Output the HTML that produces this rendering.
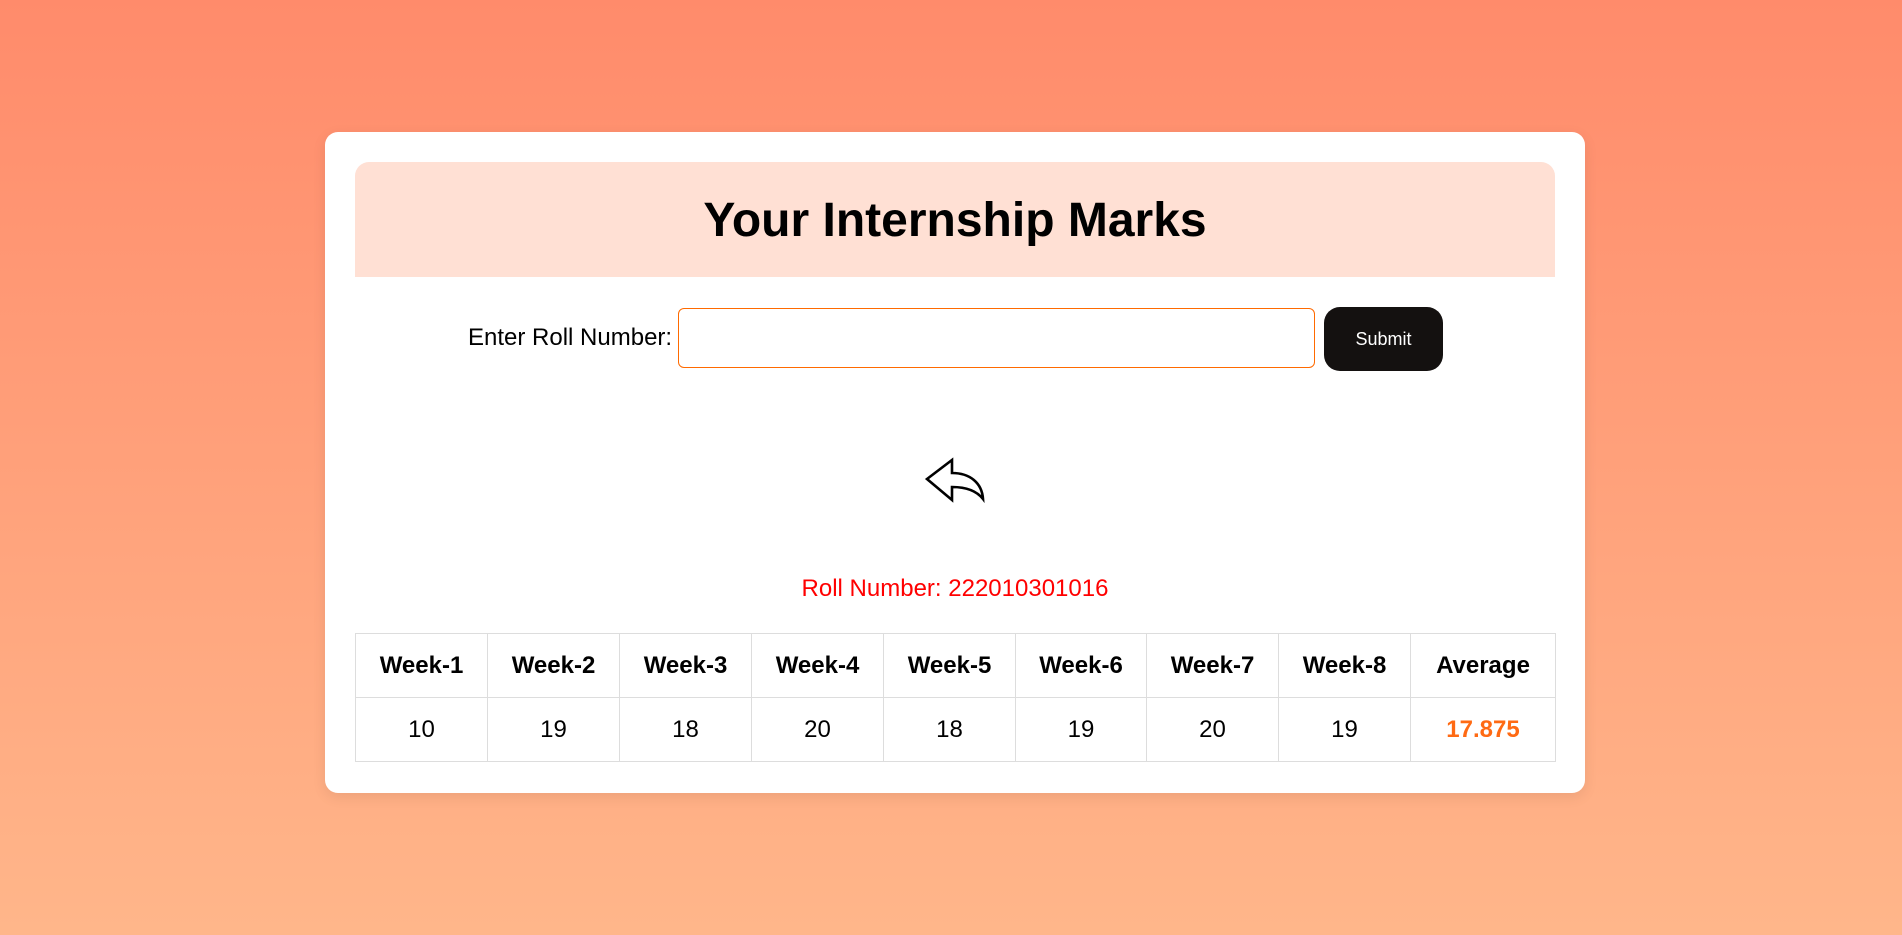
<!DOCTYPE html>
<html><head><style>
html,body{margin:0;padding:0;width:1902px;height:935px;overflow:hidden}
body{background:linear-gradient(180deg,#ff8b6b 0%,#ffb68a 100%);font-family:"Liberation Sans",Arial,sans-serif;position:relative}
.card{position:absolute;left:325px;top:132px;width:1260px;height:661px;background:#fff;border-radius:13px;box-shadow:0 4px 14px rgba(0,0,0,0.08)}
.head{position:absolute;left:30px;top:30px;width:1200px;height:115px;background:#ffe0d4;border-radius:14px 14px 0 0}
.head h1{margin:0;font-size:48px;font-weight:bold;text-align:center;line-height:117px;color:#000}
.label{position:absolute;left:143px;top:176px;font-size:24px;line-height:60px;color:#000}
.input{position:absolute;left:353px;top:176px;width:635px;height:58px;border:1px solid #ff6a00;border-radius:6px}
.btn{position:absolute;left:999px;top:175px;width:119px;height:64px;background:#141110;border-radius:16px;color:#fff;font-size:18px;text-align:center;line-height:64px}
svg.arrow{position:absolute;left:585px;top:318px}
.roll{position:absolute;left:0;width:1260px;top:444px;text-align:center;color:#f00;font-size:24px;line-height:26px}
table{position:absolute;left:30px;top:501px;width:1200px;border-collapse:collapse;table-layout:fixed}
td,th{border:1px solid #ddd;height:63px;text-align:center;font-size:24px;padding:0;color:#000}
th{font-weight:bold}
td.avg{color:#ff6a13;font-weight:bold}
</style></head><body>
<div class="card">
<div class="head"><h1>Your Internship Marks</h1></div>
<div class="label">Enter Roll Number:</div>
<div class="input"></div>
<div class="btn">Submit</div>
<svg class="arrow" width="90" height="60" viewBox="0 0 90 60"><path d="M17 29 L42 10 L42 23 C60 23 72 33 73 49 C66 40 55 37 42 37 L42 50 Z" fill="#fff" stroke="#000" stroke-width="2.6" stroke-linejoin="miter"/></svg>
<div class="roll">Roll Number: 222010301016</div>
<table>
<colgroup><col style="width:132px"><col style="width:132px"><col style="width:132px"><col style="width:132px"><col style="width:132px"><col style="width:131px"><col style="width:132px"><col style="width:132px"><col style="width:145px"></colgroup>
<tr><th>Week-1</th><th>Week-2</th><th>Week-3</th><th>Week-4</th><th>Week-5</th><th>Week-6</th><th>Week-7</th><th>Week-8</th><th>Average</th></tr>
<tr><td>10</td><td>19</td><td>18</td><td>20</td><td>18</td><td>19</td><td>20</td><td>19</td><td class="avg">17.875</td></tr>
</table>
</div>
</body></html>
